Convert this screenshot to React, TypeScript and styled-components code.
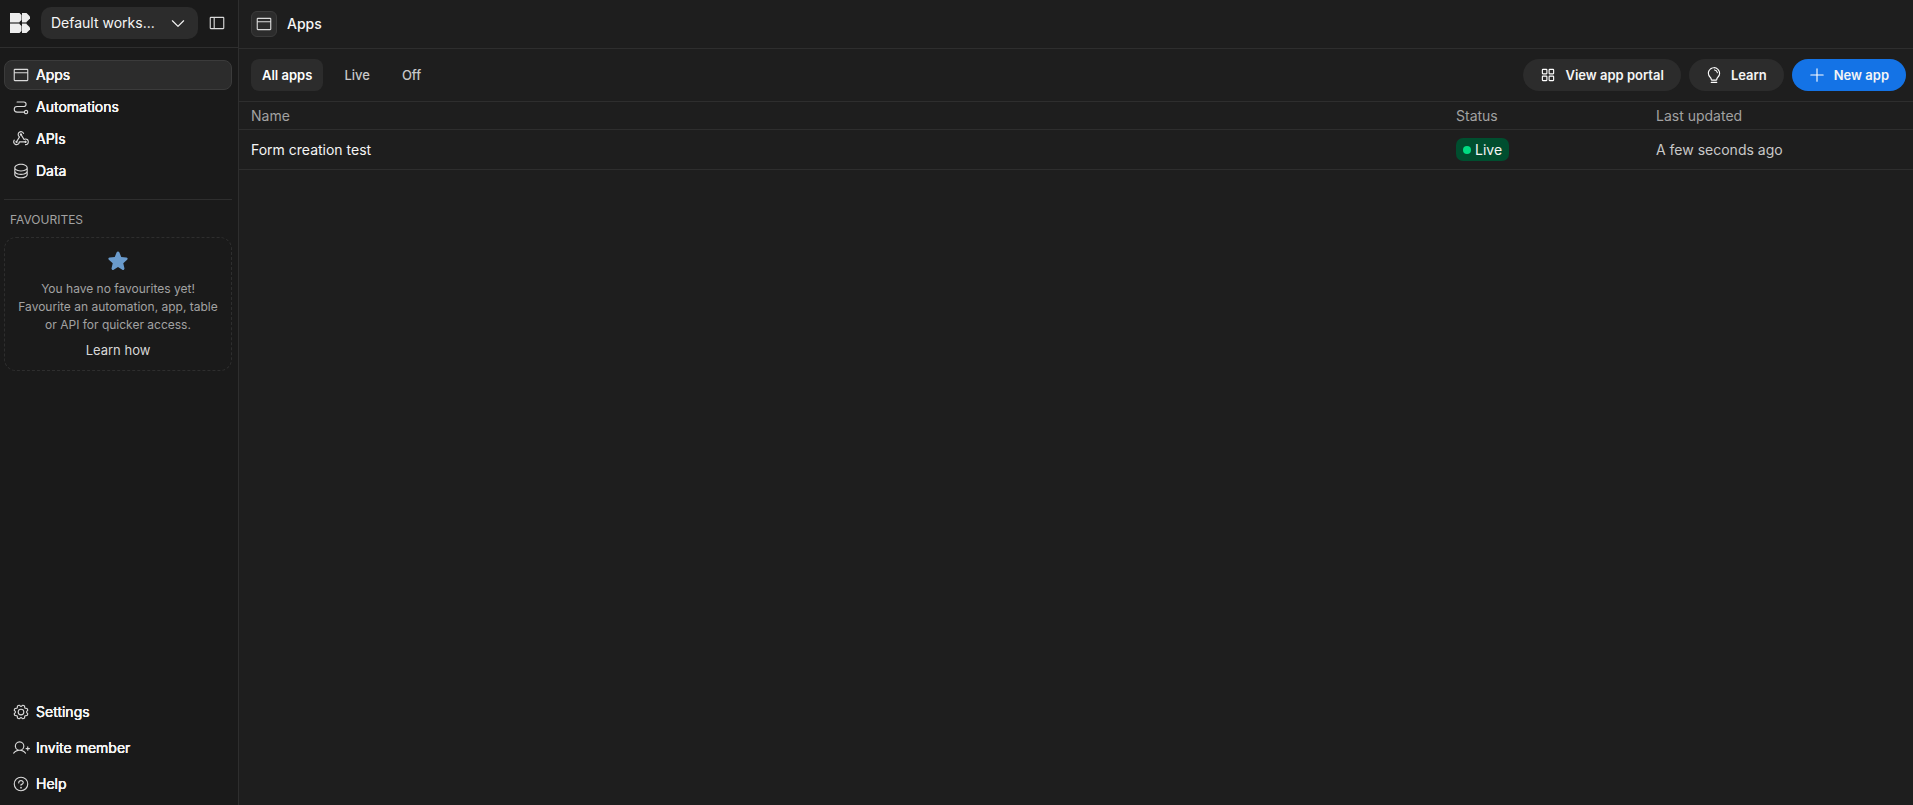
import React from "react";
import styled, { createGlobalStyle } from "styled-components";
import {
  PiBrowser,
  PiCaretDown,
  PiDatabase,
  PiGear,
  PiLightbulb,
  PiPath,
  PiPlus,
  PiQuestion,
  PiSidebarSimple,
  PiSquaresFour,
  PiStarFill,
  PiUserPlus,
  PiWebhooksLogo,
} from "react-icons/pi";

const color = {
  side: "#1a1a1a",
  main: "#1e1e1e",
  raised: "#2c2c2c",
  line: "#2e2e2e",
  edge: "#3b3b3b",
  text: "#f5f5f5",
  soft: "#c8c8c8",
  icon: "#dadada",
  muted: "#a2a2a2",
  blue: "#1473e6",
};

const GlobalStyle = createGlobalStyle`
  *, *::before, *::after { box-sizing: border-box; }
  body {
    margin: 0;
    background: ${color.main};
    color: ${color.text};
    font: 400 14px/20px Inter, "Liberation Sans", sans-serif;
  }
  button { font: inherit; color: inherit; border: 0; cursor: pointer; }
  a { color: inherit; text-decoration: none; }
  svg { flex: none; display: block; }
`;

const Layout = styled.div`
  display: flex;
  min-height: 100vh;
`;

const Sidebar = styled.aside`
  flex: none;
  display: flex;
  flex-direction: column;
  width: 239px;
  background: ${color.side};
  border-right: 1px solid ${color.line};
`;

const SideHeader = styled.header`
  display: flex;
  align-items: center;
  height: 48px;
  padding: 0 12px 1px 10px;
  border-bottom: 1px solid ${color.line};
`;

const Workspace = styled.button`
  display: flex;
  align-items: center;
  justify-content: space-between;
  flex: 1;
  height: 32px;
  margin: 0 10px 0 11px;
  padding: 0 11px 0 10px;
  border-radius: 10px;
  background: ${color.raised};
`;

const IconButton = styled.button`
  padding: 0;
  background: none;
  color: ${color.icon};
`;

const SideNav = styled.nav<{ $bottom?: boolean }>`
  display: flex;
  flex-direction: column;
  gap: ${(p) => (p.$bottom ? 6 : 2)}px;
  padding: ${(p) => (p.$bottom ? "0 6px 6px 4px" : "12px 6px 0 4px")};
  margin-top: ${(p) => (p.$bottom ? "auto" : 0)};
`;

const NavLink = styled.a<{ $active?: boolean }>`
  display: flex;
  align-items: center;
  gap: 6px;
  height: 30px;
  padding: 0 7px;
  border: 1px solid ${(p) => (p.$active ? color.edge : "transparent")};
  border-radius: 8px;
  background: ${(p) => (p.$active ? color.raised : "transparent")};
  text-shadow: 0 0 0 currentColor, 0 0 0 currentColor;

  svg { color: ${color.icon}; }
`;

const Favourites = styled.section`
  margin: 13px 6px 0 4px;
  padding-top: 12px;
  border-top: 1px solid ${color.line};
`;

const SectionTitle = styled.h2`
  margin: 0 0 9px 6px;
  font-size: 12px;
  line-height: 16px;
  font-weight: 400;
  color: ${color.muted};
`;

const EmptyBox = styled.div`
  display: flex;
  flex-direction: column;
  align-items: center;
  padding: 12px 8px 10px;
  border: 1px dashed ${color.line};
  border-radius: 12px;
  text-align: center;

  svg { color: #6a9bcc; }
`;

const EmptyText = styled.p`
  margin: 8px 0 6px;
  font-size: 12px;
  line-height: 18px;
  color: ${color.muted};
`;

const LearnHow = styled.a`
  font-size: 13px;
  line-height: 20px;
  color: #d8d8d8;
`;

const Main = styled.main`
  flex: 1;
  min-width: 0;
`;

const PageHeader = styled.header`
  display: flex;
  align-items: center;
  gap: 10px;
  height: 49px;
  padding: 0 12px 1px;
  border-bottom: 1px solid ${color.line};
`;

const PageIcon = styled.span`
  display: grid;
  place-items: center;
  width: 26px;
  height: 26px;
  border: 1px solid ${color.edge};
  border-radius: 6px;
  background: ${color.raised};
  color: ${color.icon};
`;

const PageTitle = styled.h1`
  margin: 0;
  font-size: 14px;
  line-height: 20px;
  font-weight: 500;
`;

const Toolbar = styled.div`
  display: flex;
  align-items: center;
  justify-content: space-between;
  padding: 10px 7px 10px 12px;
  border-bottom: 1px solid ${color.line};
`;

const Group = styled.div<{ $gap: number }>`
  display: flex;
  gap: ${(p) => p.$gap}px;
`;

const Tab = styled.button<{ $active?: boolean }>`
  height: 32px;
  padding: 0 11px;
  border-radius: 8px;
  background: ${(p) => (p.$active ? color.raised : "transparent")};
  color: ${(p) => (p.$active ? "#ffffff" : color.soft)};
  font-size: 13px;
  font-weight: ${(p) => (p.$active ? 600 : 500)};
`;

const ActionButton = styled.button<{ $primary?: boolean }>`
  display: flex;
  align-items: center;
  gap: 8px;
  height: 32px;
  padding: 0 17px 0 16px;
  border-radius: 16px;
  background: ${(p) => (p.$primary ? color.blue : color.raised)};
  font-size: 13px;
  font-weight: 600;

  svg { color: #ffffff; }
`;

const Table = styled.table`
  width: 100%;
  table-layout: fixed;
  border-collapse: separate;
  border-spacing: 0;
  text-align: left;
`;

const HeadCell = styled.th<{ $width?: number }>`
  width: ${(p) => (p.$width ? `${p.$width}px` : "auto")};
  height: 28px;
  padding: 0;
  border-bottom: 1px solid ${color.line};
  font-weight: 400;
  color: ${color.muted};

  &:first-child { padding-left: 12px; }
`;

const Cell = styled.td<{ $soft?: boolean }>`
  height: 40px;
  padding: 0;
  border-bottom: 1px solid ${color.line};
  color: ${(p) => (p.$soft ? color.soft : color.text)};

  &:first-child { padding-left: 12px; }
`;

const StatusBadge = styled.span`
  display: flex;
  align-items: center;
  gap: 4px;
  width: fit-content;
  height: 23px;
  padding: 0 7px;
  border-radius: 7px;
  background: #004e2f;

  &::before {
    content: "";
    width: 8px;
    height: 8px;
    border-radius: 50%;
    background: #00dc82;
  }
`;

const Logo = () => (
  <svg width="20" height="20" viewBox="0 0 20 20" fill="#ededed" aria-label="Home" role="img">
    <path d="M0 0H9.500L11.500 2V7L9.500 9H0Z" />
    <path d="M12 0H16.500L20 3.500V5.500L16.500 9H12Z" />
    <path d="M0 9H9.500V11H0ZM12 9H16.500V11H12Z" fill="#777777" />
    <path d="M0 11H9.500L11.500 13V18L9.500 20H0Z" />
    <path d="M12 11H16.500L20 14.500V16.500L16.500 20H12Z" />
  </svg>
);

const primaryLinks = [
  { label: "Apps", Icon: PiBrowser, active: true },
  { label: "Automations", Icon: PiPath },
  { label: "APIs", Icon: PiWebhooksLogo },
  { label: "Data", Icon: PiDatabase },
];

const secondaryLinks = [
  { label: "Settings", Icon: PiGear },
  { label: "Invite member", Icon: PiUserPlus },
  { label: "Help", Icon: PiQuestion },
];

const apps = [{ name: "Form creation test", status: "Live", updated: "A few seconds ago" }];

export default function App() {
  return (
    <>
      <GlobalStyle />
      <Layout>
        <Sidebar>
          <SideHeader>
            <Logo />
            <Workspace type="button">
              Default works...
              <PiCaretDown size={18} />
            </Workspace>
            <IconButton type="button" aria-label="Collapse sidebar">
              <PiSidebarSimple size={18} />
            </IconButton>
          </SideHeader>
          <SideNav>
            {primaryLinks.map(({ label, Icon, active }) => (
              <NavLink key={label} href="#" $active={active}>
                <Icon size={18} />
                {label}
              </NavLink>
            ))}
          </SideNav>
          <Favourites>
            <SectionTitle>FAVOURITES</SectionTitle>
            <EmptyBox>
              <PiStarFill size={22} />
              <EmptyText>
                You have no favourites yet!
                <br />
                Favourite an automation, app, table or API for quicker access.
              </EmptyText>
              <LearnHow href="#">Learn how</LearnHow>
            </EmptyBox>
          </Favourites>
          <SideNav $bottom>
            {secondaryLinks.map(({ label, Icon }) => (
              <NavLink key={label} href="#">
                <Icon size={18} />
                {label}
              </NavLink>
            ))}
          </SideNav>
        </Sidebar>
        <Main>
          <PageHeader>
            <PageIcon>
              <PiBrowser size={18} />
            </PageIcon>
            <PageTitle>Apps</PageTitle>
          </PageHeader>
          <Toolbar>
            <Group $gap={10}>
              <Tab type="button" $active>All apps</Tab>
              <Tab type="button">Live</Tab>
              <Tab type="button">Off</Tab>
            </Group>
            <Group $gap={8}>
              <ActionButton type="button">
                <PiSquaresFour size={18} />
                View app portal
              </ActionButton>
              <ActionButton type="button">
                <PiLightbulb size={18} />
                Learn
              </ActionButton>
              <ActionButton type="button" $primary>
                <PiPlus size={18} />
                New app
              </ActionButton>
            </Group>
          </Toolbar>
          <Table>
            <thead>
              <tr>
                <HeadCell scope="col">Name</HeadCell>
                <HeadCell scope="col" $width={200}>Status</HeadCell>
                <HeadCell scope="col" $width={257}>Last updated</HeadCell>
              </tr>
            </thead>
            <tbody>
              {apps.map((app) => (
                <tr key={app.name}>
                  <Cell>{app.name}</Cell>
                  <Cell>
                    <StatusBadge>{app.status}</StatusBadge>
                  </Cell>
                  <Cell $soft>{app.updated}</Cell>
                </tr>
              ))}
            </tbody>
          </Table>
        </Main>
      </Layout>
    </>
  );
}
